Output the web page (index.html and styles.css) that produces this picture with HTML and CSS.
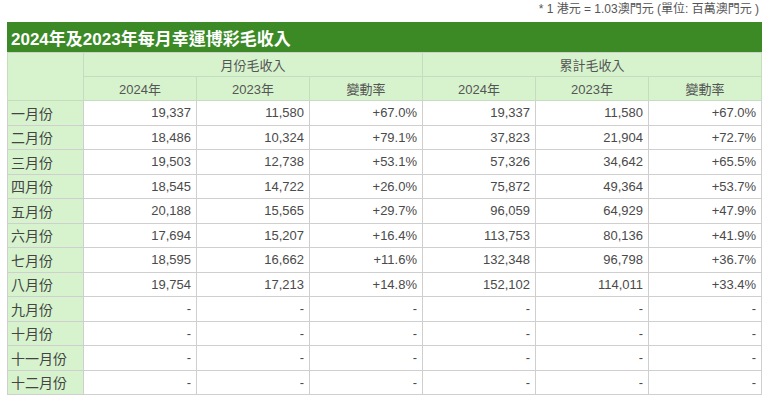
FILE: index.html
```html
<!DOCTYPE html>
<html lang="zh-Hant">
<head>
<meta charset="utf-8">
<title>2024年及2023年每月幸運博彩毛收入</title>
<link rel="stylesheet" href="styles.css">
</head>
<body>
<div class="wrap">
  <div class="note">* 1 港元 = 1.03澳門元 (單位: 百萬澳門元 )</div>
  <table class="grid">
    <colgroup>
      <col class="c-month">
      <col class="c-num"><col class="c-num"><col class="c-num">
      <col class="c-num"><col class="c-num"><col class="c-num">
    </colgroup>
    <thead>
      <tr class="title-row"><th colspan="7" class="title">2024年及2023年每月幸運博彩毛收入</th></tr>
      <tr class="hrow"><th rowspan="2" class="hmonth"></th><th colspan="3">月份毛收入</th><th colspan="3">累計毛收入</th></tr>
      <tr class="hrow"><th>2024年</th><th>2023年</th><th>變動率</th><th>2024年</th><th>2023年</th><th>變動率</th></tr>
    </thead>
    <tbody>
      <tr><th>一月份</th><td>19,337</td><td>11,580</td><td>+67.0%</td><td>19,337</td><td>11,580</td><td>+67.0%</td></tr>
      <tr><th>二月份</th><td>18,486</td><td>10,324</td><td>+79.1%</td><td>37,823</td><td>21,904</td><td>+72.7%</td></tr>
      <tr><th>三月份</th><td>19,503</td><td>12,738</td><td>+53.1%</td><td>57,326</td><td>34,642</td><td>+65.5%</td></tr>
      <tr><th>四月份</th><td>18,545</td><td>14,722</td><td>+26.0%</td><td>75,872</td><td>49,364</td><td>+53.7%</td></tr>
      <tr><th>五月份</th><td>20,188</td><td>15,565</td><td>+29.7%</td><td>96,059</td><td>64,929</td><td>+47.9%</td></tr>
      <tr><th>六月份</th><td>17,694</td><td>15,207</td><td>+16.4%</td><td>113,753</td><td>80,136</td><td>+41.9%</td></tr>
      <tr><th>七月份</th><td>18,595</td><td>16,662</td><td>+11.6%</td><td>132,348</td><td>96,798</td><td>+36.7%</td></tr>
      <tr><th>八月份</th><td>19,754</td><td>17,213</td><td>+14.8%</td><td>152,102</td><td>114,011</td><td>+33.4%</td></tr>
      <tr><th>九月份</th><td>-</td><td>-</td><td>-</td><td>-</td><td>-</td><td>-</td></tr>
      <tr><th>十月份</th><td>-</td><td>-</td><td>-</td><td>-</td><td>-</td><td>-</td></tr>
      <tr><th>十一月份</th><td>-</td><td>-</td><td>-</td><td>-</td><td>-</td><td>-</td></tr>
      <tr><th>十二月份</th><td>-</td><td>-</td><td>-</td><td>-</td><td>-</td><td>-</td></tr>
    </tbody>
  </table>
</div>
</body>
</html>
```
FILE: styles.css
```css
html, body {
  margin: 0;
  padding: 0;
  background: #ffffff;
}
body {
  font-family: "Liberation Sans", "Noto Sans CJK TC", sans-serif;
  color: #444444;
}
.wrap {
  padding: 0 6px 0 7px;
}
.note {
  height: 22px;
  line-height: 18px;
  font-size: 12px;
  color: #555555;
  text-align: right;
  padding-right: 2px;
}
.grid {
  width: 754px;
  border-collapse: collapse;
  table-layout: fixed;
  font-size: 13px;
}
.c-month { width: 76px; }
.c-num { width: 113px; }
.grid th, .grid td {
  border: 1px solid #cfcfcf;
  padding: 0 5px;
  height: 24px;
  font-weight: normal;
  white-space: nowrap;
}
.title-row .title {
  background: #3b8a26;
  color: #ffffff;
  font-weight: bold;
  font-size: 17px;
  text-align: left;
  padding: 0 3px;
  height: 29px;
  border: 1px solid #3b8a26;
  border-bottom-color: #cfcfcf;
}
.hrow th {
  background: #d6f3cd;
  text-align: center;
  color: #555555;
  border-color: #c6dcbf;
  height: 23px;
}
.grid tbody th {
  background: #d6f3cd;
  text-align: left;
  padding: 0 3px;
  color: #444444;
  font-size: 14px;
  height: 23.5px;
}
.grid tbody td {
  text-align: right;
  color: #4a4a4a;
  height: 23.5px;
}
```
